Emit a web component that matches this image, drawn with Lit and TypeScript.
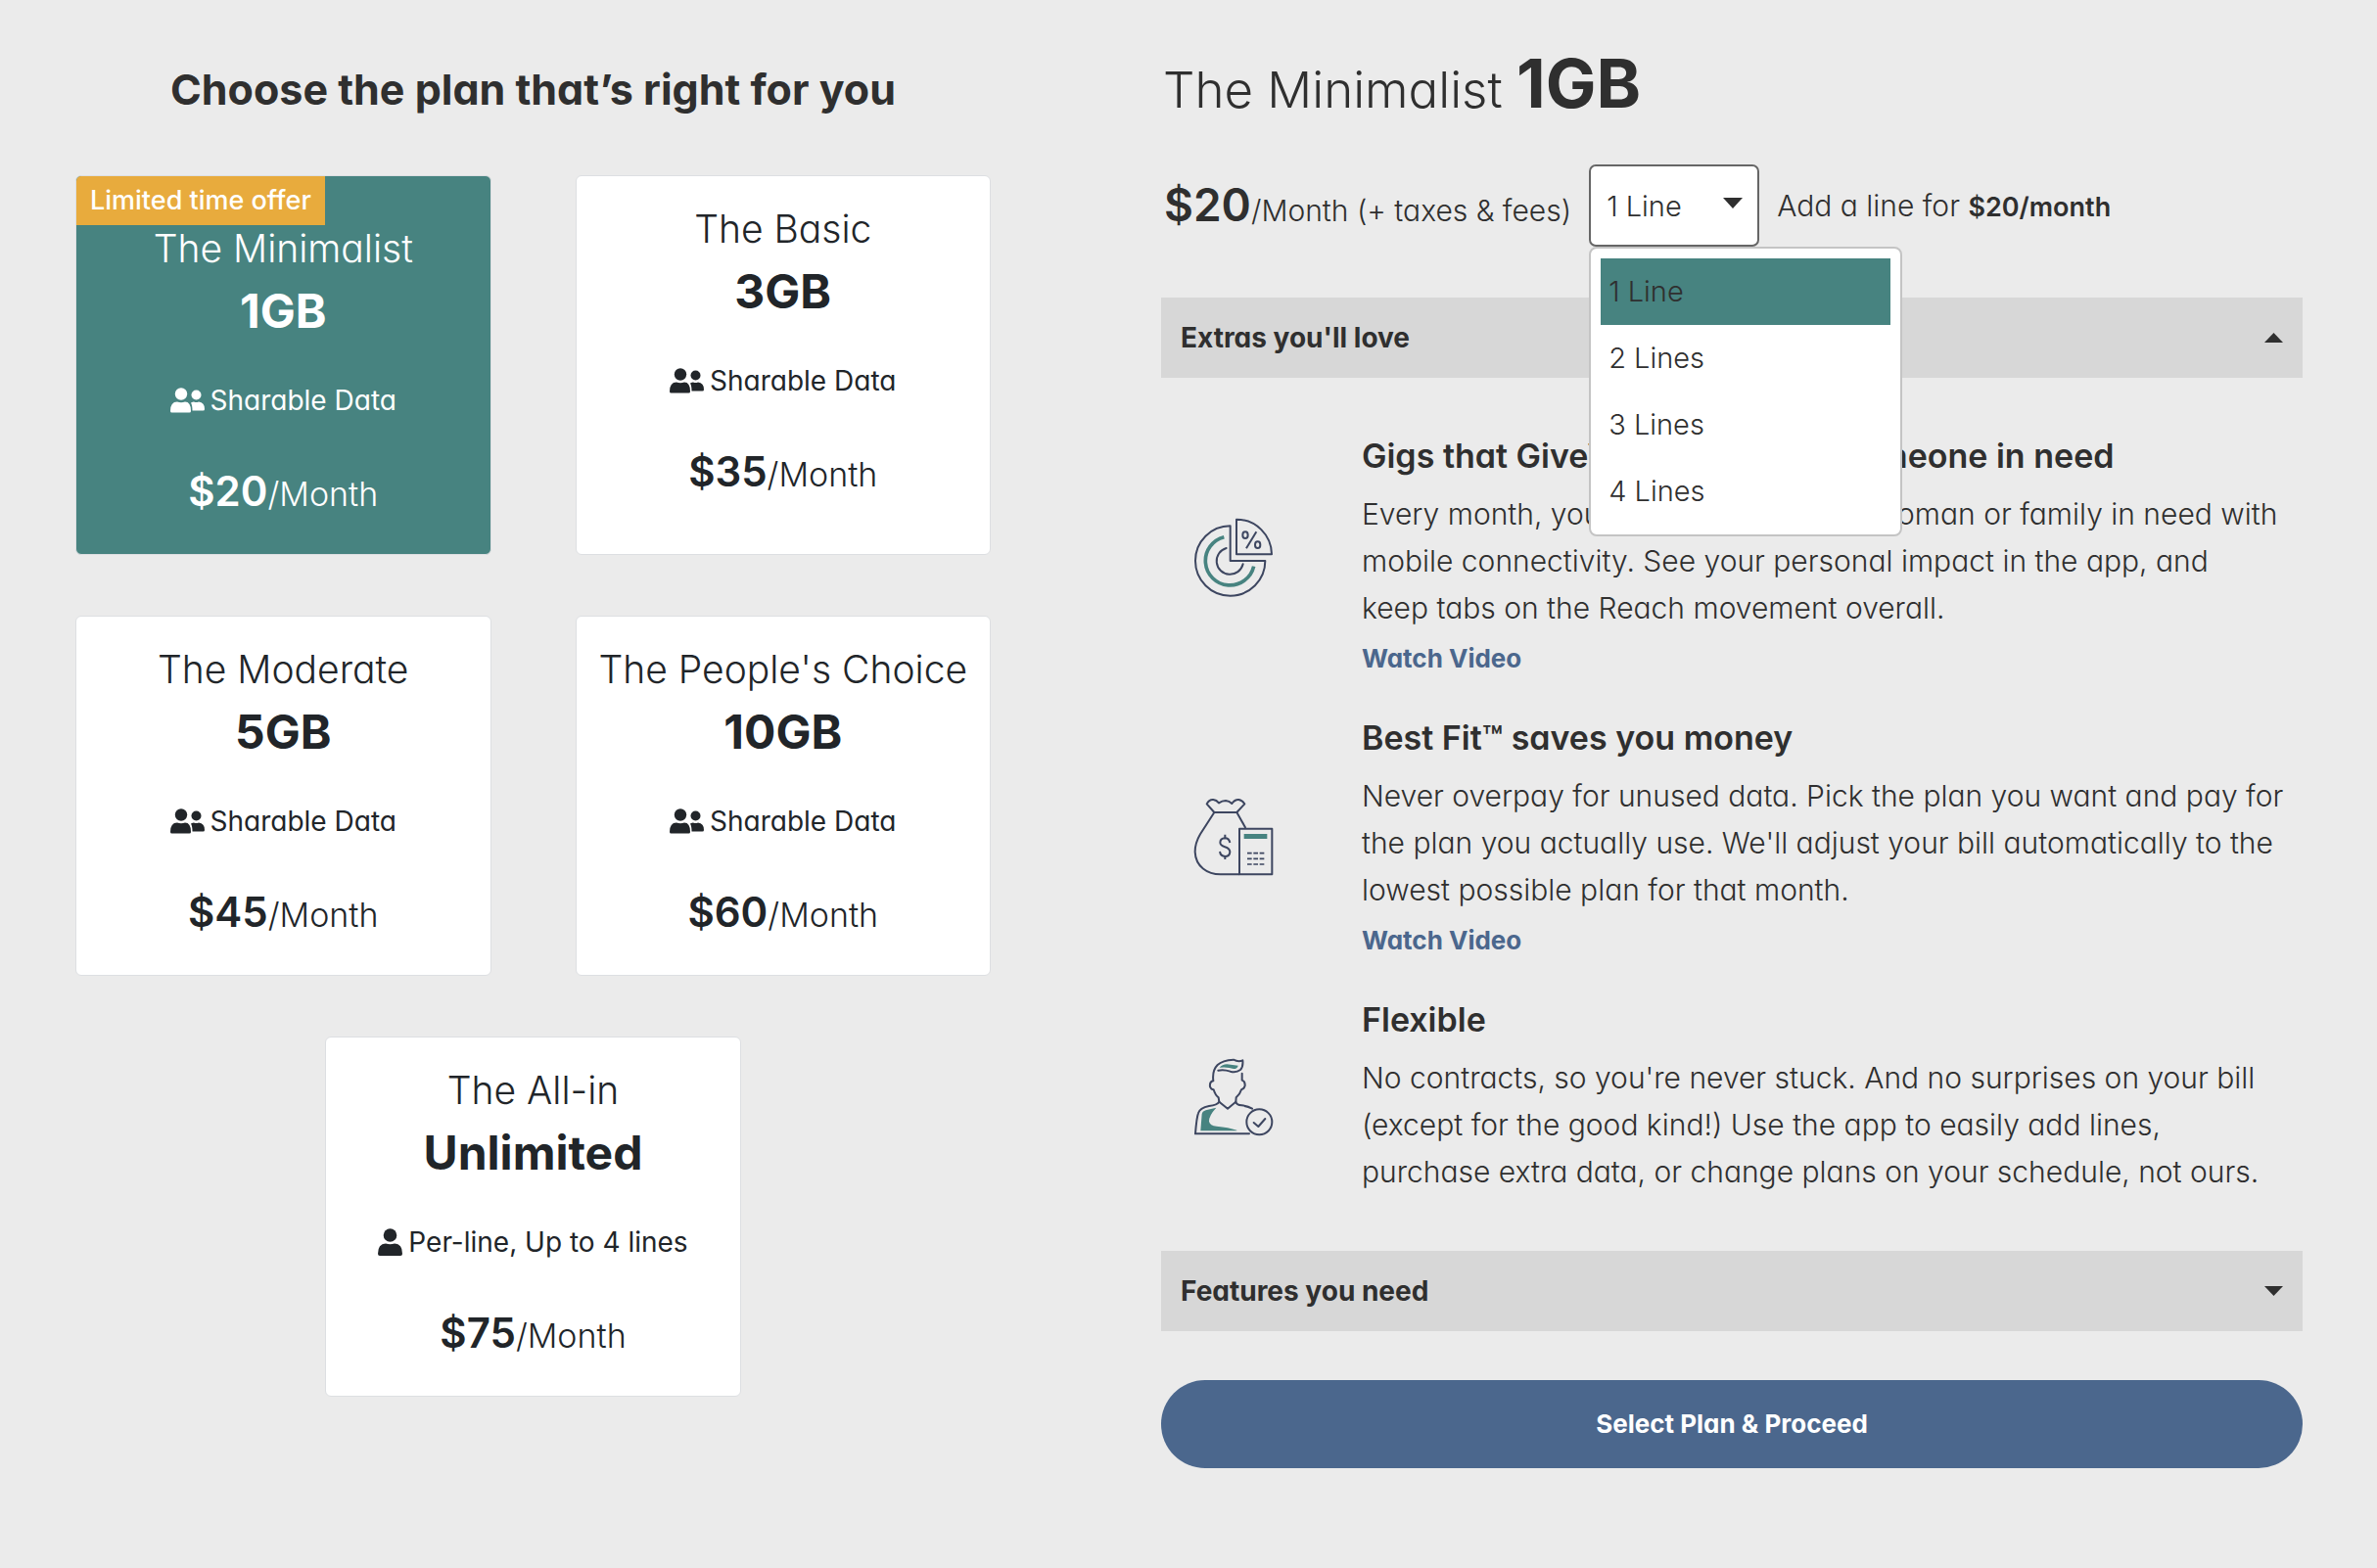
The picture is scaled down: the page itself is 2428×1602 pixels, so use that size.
import { LitElement, html, css, svg, nothing } from "lit";
import { customElement, property, state } from "lit/decorators.js";
import { classMap } from "lit/directives/class-map.js";

interface Plan {
  id: string;
  name: string;
  data: string;
  note: string;
  shared: boolean;
  price: number;
  badge?: string;
}

interface Perk {
  icon: "chart" | "bag" | "person";
  title: string;
  text: string;
  video: boolean;
}

const PLANS: Plan[] = [
  { id: "minimalist", name: "The Minimalist", data: "1GB", note: "Sharable Data", shared: true, price: 20, badge: "Limited time offer" },
  { id: "basic", name: "The Basic", data: "3GB", note: "Sharable Data", shared: true, price: 35 },
  { id: "moderate", name: "The Moderate", data: "5GB", note: "Sharable Data", shared: true, price: 45 },
  { id: "choice", name: "The People's Choice", data: "10GB", note: "Sharable Data", shared: true, price: 60 },
  { id: "all-in", name: "The All-in", data: "Unlimited", note: "Per-line, Up to 4 lines", shared: false, price: 75 },
];

const PERKS: Perk[] = [
  {
    icon: "chart",
    title: "Gigs that Give™ and supports someone in need",
    text: "Every month, you will be helping one woman or family in need with mobile connectivity. See your personal impact in the app, and keep\u00a0tabs on the Reach movement overall.",
    video: true,
  },
  {
    icon: "bag",
    title: "Best Fit™ saves you money",
    text: "Never overpay for unused data. Pick the plan you want and pay for the plan you actually use. We'll adjust your bill automatically to the lowest possible plan for that month.",
    video: true,
  },
  {
    icon: "person",
    title: "Flexible",
    text: "No contracts, so you're never stuck. And no surprises on your bill (except for the good kind!) Use the app to easily add lines, purchase extra data, or change plans on your schedule, not ours.",
    video: false,
  },
];

const LINES = ["1 Line", "2 Lines", "3 Lines", "4 Lines"];

const PERK_ART = {
  chart: svg`
    <g fill="none" stroke="#3d4660" stroke-width="6" stroke-linejoin="round">
      <path d="M170 82A107 107 0 1 0 277 189H170Z" />
      <path d="M189 62A108 108 0 0 1 297 169H189Z" />
      <path d="M158 150A41 41 0 1 0 209 199" stroke-linecap="round" />
      <ellipse cx="216" cy="110" rx="8" ry="10" />
      <ellipse cx="254" cy="140" rx="8" ry="10" />
      <path d="M250 100L219 151" />
    </g>
    <path d="M151 116A75 75 0 1 0 242 206" fill="none" stroke="#478380" stroke-width="11" />`,
  bag: svg`
    <g fill="none" stroke="#3d4660" stroke-width="6" stroke-linejoin="round">
      <path d="M121 96L98 70Q105 56 118 57Q128 58 135 67Q145 60 156 60Q167 61 175 69Q184 56 196 57Q207 59 214 70L190 96Z" />
      <path d="M121 96L78 163Q62 190 62 217C64 262 100 286 140 286H198" />
      <path d="M190 96L217 144" />
      <rect x="198" y="146" width="100" height="140" />
      <path d="M169 189Q166 175 154 175Q139 176 139 189C140 206 169 197 169 217Q168 231 154 231Q140 230 138 216" />
      <path d="M154 164V175M154 231V240" />
      <path d="M222 221H274M222 238H274M222 255H274" stroke-dasharray="14 5" stroke-width="5" />
    </g>
    <path d="M212 162H283V177H212Z" fill="#478380" />`,
  person: svg`
    <g fill="#478380">
      <path d="M79 286L83 235Q84 226 95 223L127 215Q104 240 105 257Q108 270 128 272Q165 275 190 284V286Z" />
      <path d="M137 92Q145 83 160 82L194 86Q192 96 180 96Q165 90 137 92Z" />
    </g>
    <g fill="none" stroke="#3d4660" stroke-width="6" stroke-linecap="round" stroke-linejoin="round">
      <path d="M133 101Q150 97 170 104Q188 109 201 99Q210 90 208 70Q195 76 180 68Q146 70 131 84Q114 101 118 133Q106 135 108 151Q112 160 119 160Q124 177 134 184L136 197L162 218L187 197L188 184Q200 174 204 160Q212 159 215 148Q216 134 206 131V110" />
      <path d="M136 197Q130 207 105 210Q77 215 72 232Q67 244 63 295H228" />
      <path d="M187 197Q189 206 205 208Q225 211 237 218" />
      <circle cx="259" cy="259" r="39" />
      <path d="M242 261L256 273L277 249" />
    </g>`,
};

@customElement("plan-card")
class PlanCard extends LitElement {
  @property({ attribute: false }) plan!: Plan;
  @property({ type: Boolean }) selected = false;

  static styles = css`
    :host {
      display: flex;
    }
    .card {
      flex: 1;
      display: flex;
      flex-direction: column;
      align-items: center;
      box-sizing: border-box;
      min-width: 0;
      margin: 0;
      padding: 30px 0 37px;
      border: 1px solid #dddfe2;
      border-radius: 6px;
      background: #fff;
      color: #212529;
      font-family: inherit;
      font-feature-settings: inherit;
      text-align: center;
      overflow: hidden;
      cursor: pointer;
    }
    .card.selected {
      background: #478380;
      color: #fff;
    }
    .card.offer {
      padding-top: 0;
    }
    .badge {
      align-self: flex-start;
      padding: 0 14px;
      background: #e8ab3d;
      color: #fff;
      font-size: 27px;
      font-weight: 500;
      line-height: 50px;
    }
    .name {
      font-size: 39px;
      font-weight: 300;
      line-height: 48px;
    }
    .data {
      margin-top: 8px;
      font-size: 48px;
      font-weight: 700;
      line-height: 64px;
    }
    .note {
      display: flex;
      align-items: center;
      gap: 6px;
      margin-top: 39px;
      font-size: 28px;
      font-weight: 400;
      line-height: 40px;
    }
    .price {
      margin-top: 52px;
      font-size: 34px;
      font-weight: 300;
      line-height: 48px;
    }
    .amount {
      font-size: 42px;
      font-weight: 600;
      line-height: 42px;
    }
    .people {
      fill: currentColor;
    }
  `;

  render() {
    const p = this.plan;
    return html`
      <button
        class=${classMap({ card: true, selected: this.selected, offer: !!p.badge })}
        aria-pressed=${this.selected ? "true" : "false"}
      >
        ${p.badge ? html`<span class="badge">${p.badge}</span>` : nothing}
        <span class="name">${p.name}</span>
        <span class="data">${p.data}</span>
        <span class="note">
          ${p.shared
            ? html`<svg class="people" width="35" height="26" viewBox="0 0 35 26" aria-hidden="true">
                <circle cx="11" cy="6.500" r="6.200" />
                <path d="M0 24Q0 14.500 7 14.500Q11 16 15 14.500Q21 14.500 21 24Q21 25.500 19.500 25.500H1.500Q0 25.500 0 24Z" />
                <circle cx="26.500" cy="7.500" r="5" />
                <path d="M21 15.500Q23 14.500 24 14.500Q26.500 15.500 29 14.500Q35 15 35 22Q35 23.500 33.500 23.500H22.500Q22.500 18 21 15.500Z" />
              </svg>`
            : html`<svg class="people" width="25" height="28" viewBox="0 0 25 28" aria-hidden="true">
                <circle cx="12.500" cy="7" r="6.800" />
                <path d="M0 26Q0 15.500 8 15.500Q12.500 17 17 15.500Q25 15.500 25 26Q25 28 23 28H2Q0 28 0 26Z" />
              </svg>`}
          ${p.note}
        </span>
        <span class="price"><span class="amount">$${p.price}</span>/Month</span>
      </button>
    `;
  }
}

@customElement("line-picker")
class LinePicker extends LitElement {
  @property({ type: Number }) value = 0;
  @state() private open = true;

  static styles = css`
    :host {
      display: block;
      position: relative;
    }
    .field {
      display: grid;
      align-items: center;
    }
    .select {
      grid-area: 1 / 1;
      appearance: none;
      box-sizing: border-box;
      width: 174px;
      height: 84px;
      margin: 0;
      padding: 0 44px 0 16px;
      border: 2px solid #666;
      border-radius: 7px;
      background: #fff;
      color: #2f2f2f;
      font-family: inherit;
      font-feature-settings: inherit;
      font-size: 29px;
      font-weight: 300;
    }
    .arrow {
      grid-area: 1 / 1;
      justify-self: end;
      margin-right: 17px;
      padding-bottom: 6px;
      fill: #2f2f2f;
      pointer-events: none;
    }
    .list {
      position: absolute;
      top: 100%;
      left: 0;
      z-index: 2;
      box-sizing: border-box;
      width: 320px;
      padding: 10px;
      border: 2px solid #c4c4c4;
      border-radius: 8px;
      background: #fff;
    }
    .option {
      display: block;
      width: 100%;
      margin: 0;
      padding: 0 8px;
      border: 0;
      background: none;
      color: #2f2f2f;
      font-family: inherit;
      font-feature-settings: inherit;
      font-size: 29px;
      font-weight: 300;
      line-height: 68px;
      text-align: left;
    }
    .option.current {
      background: #478380;
    }
  `;

  private pick(i: number) {
    this.value = i;
    this.open = false;
  }

  render() {
    return html`
      <div class="field">
        <select
          class="select"
          aria-label="Number of lines"
          @mousedown=${(e: Event) => {
            e.preventDefault();
            this.open = !this.open;
          }}
        >
          ${LINES.map((l, i) => html`<option ?selected=${i === this.value}>${l}</option>`)}
        </select>
        <svg class="arrow" width="20" height="11" viewBox="0 0 20 11" aria-hidden="true"><path d="M0 0H20L10 11Z" /></svg>
      </div>
      ${this.open
        ? html`<div class="list" role="listbox" aria-label="Number of lines">
            ${LINES.map(
              (l, i) => html`<button
                class=${classMap({ option: true, current: i === this.value })}
                role="option"
                aria-selected=${i === this.value ? "true" : "false"}
                @click=${() => this.pick(i)}
              >${l}</button>`
            )}
          </div>`
        : nothing}
    `;
  }
}

@customElement("app-root")
class AppRoot extends LitElement {
  @state() private selected = PLANS[0].id;
  @state() private extrasOpen = true;

  static styles = css`
    :host {
      display: block;
      box-sizing: border-box;
      min-height: 100vh;
      background: #ebebeb;
      color: #2f2f2f;
      font-family: Inter, "Liberation Sans", sans-serif;
      font-feature-settings: "cv11";
    }
    .page {
      display: grid;
      grid-template-columns: minmax(0, 935fr) minmax(0, 1166fr);
      gap: 174px;
      align-items: start;
      padding: 45px 76px 45px 77px;
    }
    .plans {
      padding-top: 20px;
    }
    .title {
      margin: 0 0 62px;
      font-size: 43px;
      font-weight: 700;
      line-height: 52px;
      text-align: center;
    }
    .cards {
      display: flex;
      flex-wrap: wrap;
      justify-content: center;
      gap: 62px 86px;
    }
    .plan {
      flex: 0 0 calc(50% - 43px);
    }
    .heading {
      margin: 0 0 39px;
      padding: 6px 0 0 2px;
      font-size: 51px;
      font-weight: 300;
      line-height: 74px;
    }
    .size {
      font-size: 69px;
      font-weight: 700;
      line-height: 68px;
    }
    .pricing {
      display: flex;
      align-items: center;
      gap: 18px;
      margin-bottom: 52px;
      padding-left: 3px;
      font-size: 30px;
      font-weight: 300;
      line-height: 60px;
      white-space: nowrap;
    }
    .cost {
      padding-top: 4px;
    }
    .amount {
      font-size: 46px;
      font-weight: 600;
    }
    .extra {
      font-size: 27px;
      font-weight: 600;
      line-height: 48px;
    }
    .bar {
      display: flex;
      align-items: center;
      justify-content: space-between;
      width: 100%;
      height: 82px;
      margin: 0;
      padding: 0 20px;
      border: 0;
      background: #d7d7d7;
      color: #2f2f2f;
      font-family: inherit;
      font-feature-settings: inherit;
      font-size: 28px;
      font-weight: 700;
      fill: #2f2f2f;
    }
    .perks {
      display: grid;
      gap: 27px;
      padding: 50px 14px 57px;
    }
    .perk {
      display: grid;
      grid-template-columns: 120px minmax(0, 1fr);
      gap: 71px;
      align-items: center;
    }
    .art {
      padding-top: 6px;
    }
    .perk-title {
      margin: 0 0 5px;
      font-size: 34px;
      font-weight: 600;
      line-height: 60px;
    }
    .perk-text {
      margin: 0;
      font-size: 30px;
      font-weight: 300;
      line-height: 48px;
    }
    .video {
      display: block;
      margin-top: 4px;
      color: #4b678d;
      font-size: 26px;
      font-weight: 700;
      line-height: 48px;
      text-decoration: none;
    }
    .proceed {
      display: block;
      width: 100%;
      margin: 50px 0 0;
      padding: 0;
      border: 0;
      border-radius: 45px;
      background: #4b678d;
      color: #fff;
      font-family: inherit;
      font-feature-settings: inherit;
      font-size: 26px;
      font-weight: 700;
      line-height: 90px;
    }
  `;

  render() {
    const plan = PLANS.find((p) => p.id === this.selected)!;
    return html`
      <main class="page">
        <section class="plans">
          <h1 class="title">Choose the plan that’s right for you</h1>
          <div class="cards">
            ${PLANS.map(
              (p) => html`<plan-card
                class="plan"
                .plan=${p}
                ?selected=${p.id === this.selected}
                @click=${() => (this.selected = p.id)}
              ></plan-card>`
            )}
          </div>
        </section>
        <section>
          <h2 class="heading">${plan.name} <span class="size">${plan.data}</span></h2>
          <div class="pricing">
            <span class="cost"><span class="amount">$${plan.price}</span>/Month (+ taxes &amp; fees)</span>
            <line-picker></line-picker>
            <span>Add a line for <span class="extra">$20/month</span></span>
          </div>
          <button
            class="bar"
            aria-expanded=${this.extrasOpen ? "true" : "false"}
            @click=${() => (this.extrasOpen = !this.extrasOpen)}
          >
            Extras you'll love
            <svg width="19" height="10" viewBox="0 0 19 10" aria-hidden="true">
              <path d=${this.extrasOpen ? "M0 10H19L9.500 0Z" : "M0 0H19L9.500 10Z"} />
            </svg>
          </button>
          ${this.extrasOpen
            ? html`<div class="perks">
                ${PERKS.map(
                  (k) => html`<article class="perk">
                    <svg class="art" width="120" height="120" viewBox="0 0 360 360" aria-hidden="true">${PERK_ART[k.icon]}</svg>
                    <div>
                      <h3 class="perk-title">${k.title}</h3>
                      <p class="perk-text">${k.text}</p>
                      ${k.video ? html`<a class="video" href="#">Watch Video</a>` : nothing}
                    </div>
                  </article>`
                )}
              </div>`
            : nothing}
          <button class="bar" aria-expanded="false">
            Features you need
            <svg width="19" height="10" viewBox="0 0 19 10" aria-hidden="true"><path d="M0 0H19L9.500 10Z" /></svg>
          </button>
          <button class="proceed">Select Plan &amp; Proceed</button>
        </section>
      </main>
    `;
  }
}
